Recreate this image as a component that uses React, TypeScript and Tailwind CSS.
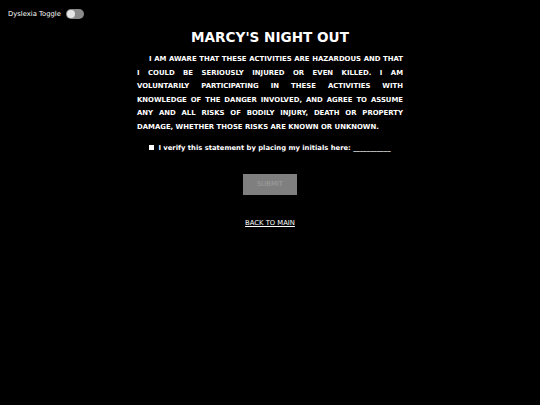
import { useState } from "react";

const App = () => {
  const [dyslexia, setDyslexia] = useState(false);
  const [checked, setChecked] = useState(false);

  return (
    <div className="min-h-[405px] w-full bg-black text-white font-['DejaVu_Sans',Verdana,sans-serif]">
      {/* Toggle */}
      <div className="flex items-center gap-[5px] pl-[8px] pt-[9px] h-[19px]">
        <span className="text-[6.8px] leading-none">Dyslexia Toggle</span>
        <button
          onClick={() => setDyslexia(!dyslexia)}
          className="relative w-[18px] h-[10px] rounded-full bg-[#8a8a8a]"
        >
          <span className="absolute left-[1px] top-[1px] w-[8px] h-[8px] rounded-full bg-[#e6e6e6]" />
        </button>
      </div>

      <div className="flex flex-col items-center">
        <h1 className="mt-[9px] text-[13.6px] font-bold leading-[18px]">
          MARCY'S NIGHT OUT
        </h1>

        <p className="mt-[7px] w-[266px] text-[6.9px] font-bold leading-[13.6px] text-justify indent-[12px]">
          I AM AWARE THAT THESE ACTIVITIES ARE HAZARDOUS AND THAT I COULD BE
          SERIOUSLY INJURED OR EVEN KILLED. I AM VOLUNTARILY PARTICIPATING IN
          THESE ACTIVITIES WITH KNOWLEDGE OF THE DANGER INVOLVED, AND AGREE TO
          ASSUME ANY AND ALL RISKS OF BODILY INJURY, DEATH OR PROPERTY DAMAGE,
          WHETHER THOSE RISKS ARE KNOWN OR UNKNOWN.
        </p>

        <label className="mt-[10px] flex items-center gap-[4px] text-[6.8px] font-bold leading-none">
          <input
            type="checkbox"
            checked={checked}
            onChange={() => setChecked(!checked)}
            className="appearance-none w-[5px] h-[5px] bg-white"
          />
          <span>I verify this statement by placing my initials here: ___________</span>
        </label>

        <button
          disabled={!checked}
          className="mt-[23px] w-[54px] h-[21px] bg-[#7f7f7f] text-[#a0a0a0] text-[6.8px] leading-none"
        >
          SUBMIT
        </button>

        <a href="#" className="mt-[25px] text-[6.8px] leading-none underline">
          BACK TO MAIN
        </a>
      </div>
    </div>
  );
};

export default App;
